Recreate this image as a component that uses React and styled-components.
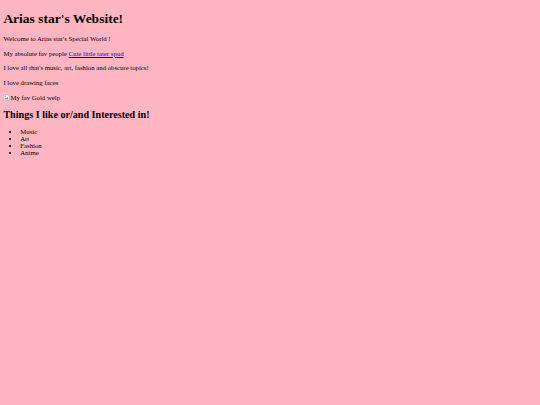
import styled, { createGlobalStyle } from 'styled-components';

const GlobalStyle = createGlobalStyle`
  html, body {
    margin: 0;
    padding: 0;
    background: #ffb6c1;
  }

  body {
    margin: 3.375px;
    font-family: "Liberation Serif", "Times New Roman", serif;
    font-size: 6.75px;
    color: #000;
  }
`

const Page = styled.main`
  display: block;
`

const Title = styled.h1`
  font-size: 13.5px;
  font-weight: 700;
  margin: 0.6em 0 0.55em;
`

const Text = styled.p`
  margin: 1em 0;
  line-height: 1.18;
`

const Link = styled.a`
  color: #0000ee;
  text-decoration: underline;
`

const BrokenImage = styled.span`
  display: inline-flex;
  align-items: center;
`

const SubTitle = styled.h2`
  font-size: 10.125px;
  font-weight: 700;
  margin: 0.75em 0;
`

const List = styled.ul`
  margin: 1em 0;
  padding-left: 16.875px;
  list-style: disc;
`

function BrokenIcon() {
  return (
    <svg width="7" height="7" viewBox="0 0 16 16">
      <path d="M1 1h10l4 4v10H1z" fill="#f2f2f2" stroke="#9a9a9a" strokeWidth="1" />
      <path d="M3 12l3-4 2 2 2-3 3 5z" fill="#5aa04a" />
      <circle cx="5" cy="5" r="1.5" fill="#4a90d9" />
    </svg>
  );
}

export default function App() {
  return (
    <Page>
      <GlobalStyle />
      <Title>Arias star's Website!</Title>

      <Text>Welcome to Arias star's Special World !</Text>
      <Text>
        My absolute fav people <Link href="#">Cute little tater spud</Link>
      </Text>
      <Text>I love all that's music, art, fashion and obscure topics!</Text>
      <Text>I love drawing faces</Text>

      <BrokenImage>
        <BrokenIcon />
        My fav Gold welp
      </BrokenImage>

      <SubTitle>Things I like or/and Interested in!</SubTitle>

      <List>
        <li>Music</li>
        <li>Art</li>
        <li>Fashion</li>
        <li>Anime</li>
      </List>
    </Page>
  );
}
